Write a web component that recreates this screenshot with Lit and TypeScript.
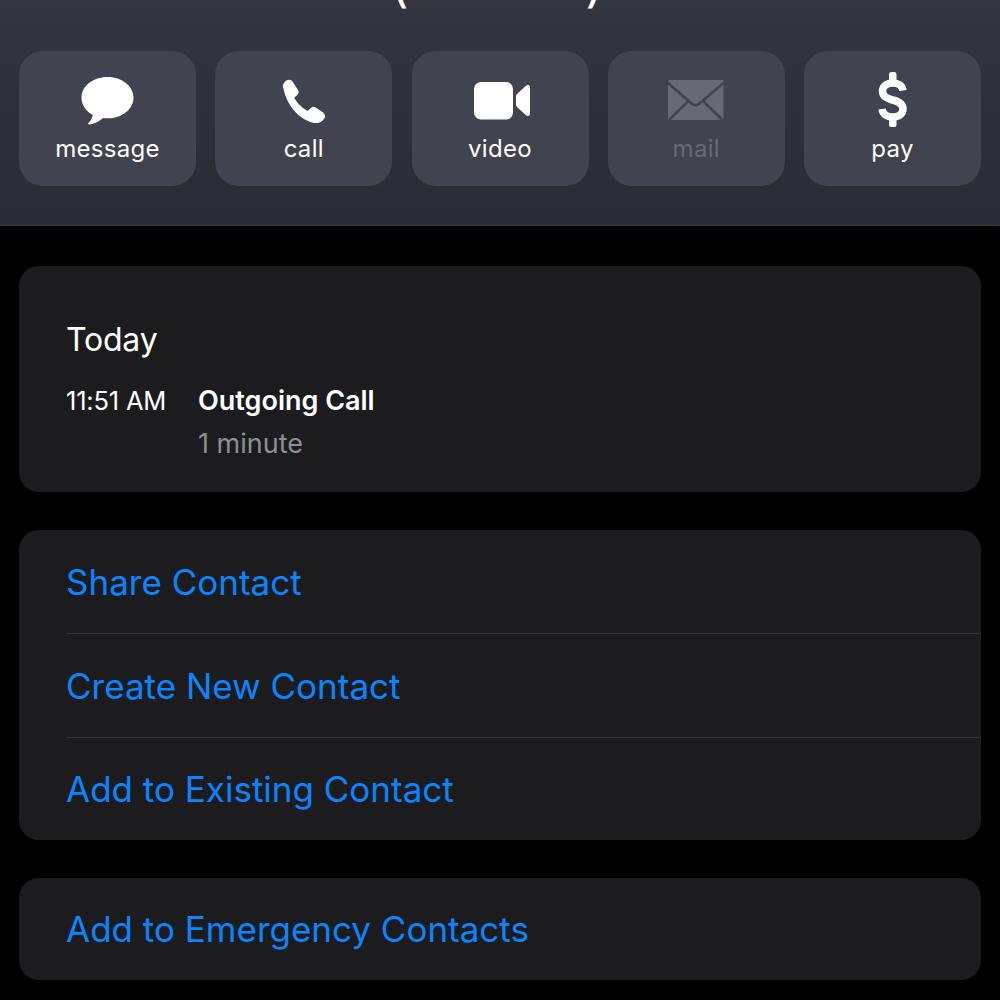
import { LitElement, html, css } from "lit";
import { customElement } from "lit/decorators.js";

const icons = {
  message: html`<svg viewBox="77.5 70 60 60"><path d="M107 77c14.4 0 26 9.200 26 20.700S121.400 118.300 107 118.300c-1.500 0-3 0-4.400-.3-3.300 2.900-8.700 6.100-13.900 6.500-1.100 0-1.300-.8-.8-1.400 1.400-1.600 3.800-4.100 4.400-8.100C85.500 111.300 81 104.900 81 97.700 81 86.200 92.600 77 107 77z"/></svg>`,
  call: html`<svg viewBox="273.500 70 60 60"><path d="M282.500 88c-.7-4.500 2.600-8.300 6.300-8.200 1.600 0 2.800 1 3.700 2.400l5 7.800c1.100 1.800.8 3.600-.7 4.900l-2.600 2.300c-.4.400-.4.800-.2 1.300 3 5 7.200 9.300 12.500 12 .6.300 1.100.2 1.500-.2l2.300-2.300c1.400-1.400 3.200-1.500 4.900-.4l7.100 4.600c2.400 1.600 2.900 4.500 1.300 6.700-2.300 3.100-6 4.700-10.200 4-14.800-2.500-28-18.800-30.600-35.300z"/></svg>`,
  video: html`<svg viewBox="470 70 60 60"><rect x="474" y="82" width="39" height="37.500" rx="7"/><path d="M516 96.500c0-1 .3-1.700 1-2.400l9-8.300c1.600-1.400 4-.6 4 1.500v26.500c0 2.200-2.400 3-4 1.500l-9-8.300c-.7-.6-1-1.400-1-2.300z"/></svg>`,
  mail: html`<svg viewBox="666 70 60 60"><rect class="env" x="668" y="80" width="55.500" height="40" rx="2"/><path class="flap" d="M668 83l23.500 20.500c2.600 2.200 5.400 2.200 8 0L723.500 83M670 119l17-16.500M721.500 119l-17-16.500"/></svg>`,
  pay: html`<svg viewBox="862.500 70 60 60"><rect x="888.500" y="72" width="7.500" height="12" rx="2.500"/><rect x="888.500" y="115" width="7.500" height="12" rx="2.500"/><path class="dollar" d="M902.500 90.500c-.8-5-5-7.500-10-7.500-6 0-10.500 3.200-10.500 8.300 0 5 4 7.200 10 8.700 6.500 1.500 10.500 3.700 10.500 9 0 5.200-4.500 8-10.500 8-5.500 0-9.700-2.700-10.500-8"/></svg>`,
};

@customElement("app-root")
export class AppRoot extends LitElement {
  static styles = css`
    :host { display: block; width: 1000px; height: 1000px; overflow: hidden; background: #000; font-family: Inter, "Noto Sans", sans-serif; color: #fff; }
    header { height: 226px; box-sizing: border-box; background: linear-gradient(#33353f, #2a2b33); border-bottom: 1px solid #3a3b44; padding: 0 19px; display: flex; flex-direction: column; }
    .title { height: 51px; overflow: hidden; display: flex; justify-content: center; gap: 177px; font-size: 48px; line-height: 48px; font-weight: 400; padding-right: 6px; box-sizing: border-box; }
    .title span { margin-top: -39px; }
    .actions { display: grid; grid-template-columns: repeat(5, 177px); justify-content: space-between; }
    .action { height: 135px; box-sizing: border-box; background: #41434f; border-radius: 24px; padding-top: 19px; display: flex; flex-direction: column; align-items: center; font-size: 24px; line-height: 30px; letter-spacing: .3px; }
    .action svg { width: 60px; height: 60px; fill: #fff; display: block; margin-bottom: 4px; }
    .action.off { color: #676973; }
    .env { fill: #676973; }
    .flap { fill: none; stroke: #41434f; stroke-width: 2.600; stroke-linecap: round; stroke-linejoin: round; }
    .dollar { fill: none; stroke: #fff; stroke-width: 7.500; }
    main { padding: 40px 19px 0; display: flex; flex-direction: column; gap: 38px; }
    .card { background: #1c1c1e; border-radius: 20px; overflow: hidden; }
    .recent { padding: 54px 47px 0; height: 226px; box-sizing: border-box; }
    .day { font-size: 32px; line-height: 40px; letter-spacing: -.2px; }
    .call { display: flex; margin-top: 21px; }
    .time { width: 132px; font-size: 25.500px; line-height: 40px; letter-spacing: -.2px; }
    .kind { font-size: 27px; line-height: 40px; font-weight: 600; }
    .dur { font-size: 27px; line-height: 40px; color: #8e8e93; margin-top: 3px; }
    .row { height: 104px; box-sizing: border-box; margin-left: 47px; display: flex; align-items: center; color: #0a84ff; font-size: 35px; border-bottom: 1px solid #38383a; }
    .row:last-child { border-bottom: 0; height: 102px; }
  `;

  render() {
    const actions: [keyof typeof icons, string][] = [["message", "message"], ["call", "call"], ["video", "video"], ["mail", "mail"], ["pay", "pay"]];
    return html`
      <header>
        <div class="title"><span>(</span><span>)</span></div>
        <div class="actions">
          ${actions.map(([k, l]) => html`<div class="action ${k === "mail" ? "off" : ""}">${icons[k]}<span>${l}</span></div>`)}
        </div>
      </header>
      <main>
        <section class="card recent">
          <div class="day">Today</div>
          <div class="call">
            <div class="time">11:51 AM</div>
            <div><div class="kind">Outgoing Call</div><div class="dur">1 minute</div></div>
          </div>
        </section>
        <section class="card">
          <div class="row">Share Contact</div>
          <div class="row">Create New Contact</div>
          <div class="row">Add to Existing Contact</div>
        </section>
        <section class="card"><div class="row">Add to Emergency Contacts</div></section>
      </main>
    `;
  }
}
